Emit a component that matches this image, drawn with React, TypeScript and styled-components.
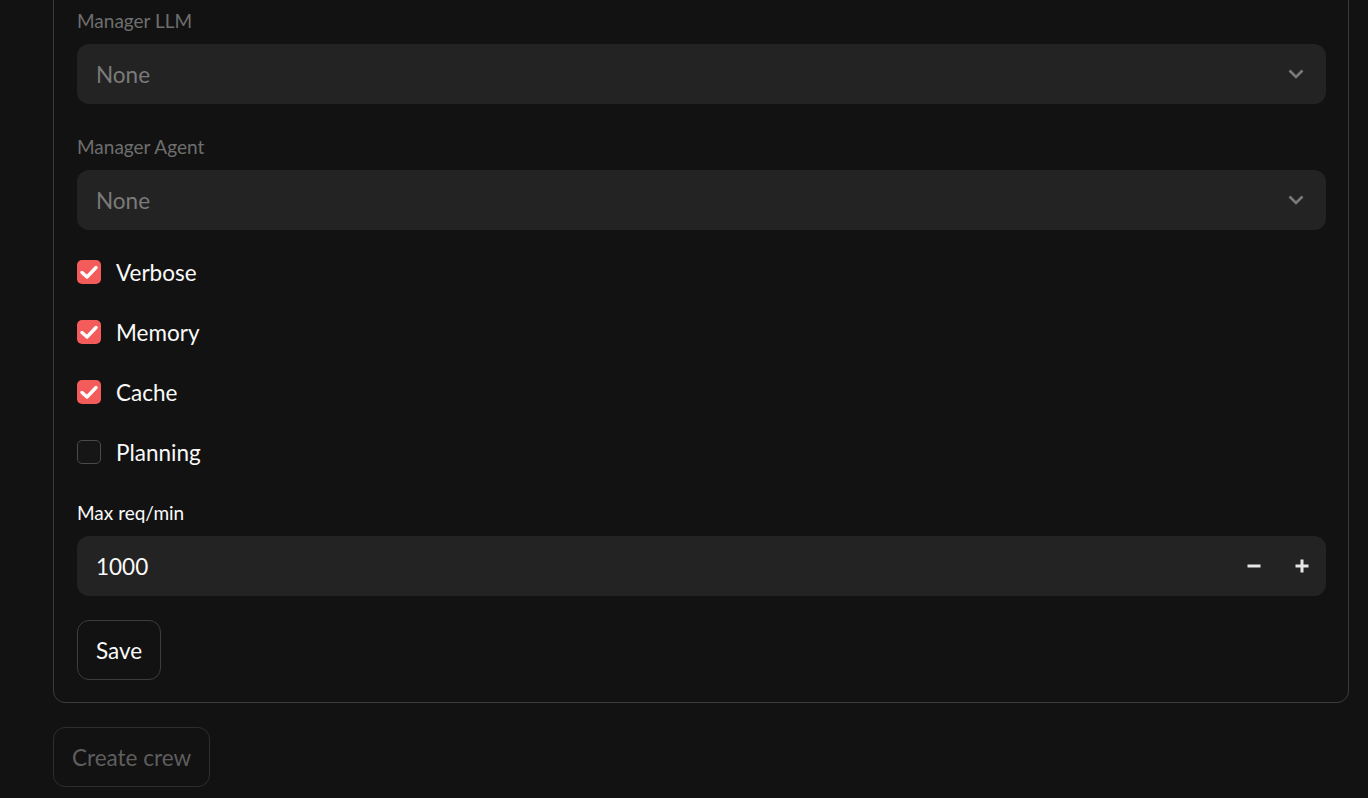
import React, { useState } from "react";
import styled, { createGlobalStyle } from "styled-components";

const GlobalStyle = createGlobalStyle`
	html, body {
		margin: 0;
		padding: 0;
		background: #121212;
	}
	body {
		font-family: Lato, "Liberation Sans", sans-serif;
		color: #fafafa;
	}
`;

const Page = styled.div`
	padding: 1px 0 0 53px;
	box-sizing: border-box;
`;

const Panel = styled.div`
	width: 1296px;
	box-sizing: border-box;
	margin-top: -24px;
	border: 1px solid #3b3b3b;
	border-radius: 12px;
	padding: 24px 22px 22px 23px;
	display: flex;
	flex-direction: column;
	gap: 24px;
`;

const Field = styled.div`
	display: flex;
	flex-direction: column;
`;

const Label = styled.label<{ $disabled?: boolean }>`
	height: 36px;
	margin-bottom: 6px;
	display: flex;
	align-items: center;
	font-size: 19px;
	color: ${(p) => (p.$disabled ? "#6e6e6e" : "#fafafa")};
`;

const SelectBox = styled.div`
	height: 60px;
	border-radius: 12px;
	background: #232323;
	display: flex;
	align-items: center;
	justify-content: space-between;
	padding: 0 21px 0 19px;
	font-size: 22.5px;
	color: #7a7a7a;
	cursor: not-allowed;
`;

const NumberBox = styled(SelectBox)`
	color: #fafafa;
	padding-right: 15px;
	cursor: text;
`;

const Steppers = styled.div`
	display: flex;
	gap: 30px;
	align-items: center;
`;

const StepButton = styled.button`
	background: none;
	border: none;
	padding: 0;
	width: 18px;
	height: 18px;
	display: flex;
	align-items: center;
	justify-content: center;
	cursor: pointer;
`;

const CheckRow = styled.label`
	height: 36px;
	display: flex;
	align-items: center;
	gap: 15px;
	font-size: 22.5px;
	color: #fafafa;
	cursor: pointer;
`;

const Box = styled.span<{ $checked: boolean }>`
	width: 24px;
	height: 24px;
	box-sizing: border-box;
	border-radius: 5px;
	display: flex;
	align-items: center;
	justify-content: center;
	background: ${(p) => (p.$checked ? "#f45b5b" : "#161616")};
	border: ${(p) => (p.$checked ? "none" : "1px solid #4a4a4a")};
`;

const Button = styled.button<{ $disabled?: boolean }>`
	align-self: flex-start;
	height: 60px;
	box-sizing: border-box;
	padding: 0 18px;
	border-radius: 12px;
	background: transparent;
	border: 1px solid ${(p) => (p.$disabled ? "#2e2e2e" : "#3d3d3d")};
	color: ${(p) => (p.$disabled ? "#5e5e5e" : "#fafafa")};
	font-family: inherit;
	font-size: 22.5px;
	cursor: ${(p) => (p.$disabled ? "not-allowed" : "pointer")};
`;

const Footer = styled.div`
	margin-top: 24px;
	display: flex;
`;

const Chevron = () => (
	<svg width="18" height="18" viewBox="0 0 18 18">
		<path d="M2.5 5.5 L9 12 L15.5 5.5" fill="none" stroke="#7a7a7a" strokeWidth="2.6" />
	</svg>
);

const Minus = () => (
	<svg width="14" height="14" viewBox="0 0 14 14">
		<rect x="0.5" y="5.5" width="13" height="3" fill="#e6e6e6" />
	</svg>
);

const Plus = () => (
	<svg width="14" height="14" viewBox="0 0 14 14">
		<rect x="0.5" y="5.5" width="13" height="3" fill="#e6e6e6" />
		<rect x="5.5" y="0.5" width="3" height="13" fill="#e6e6e6" />
	</svg>
);

const Check = () => (
	<svg width="24" height="24" viewBox="0 0 24 24">
		<path d="M5 12.5 L10 17 L19 7.5" fill="none" stroke="#ffffff" strokeWidth="3.4" strokeLinecap="round" strokeLinejoin="round" />
	</svg>
);

const options = ["Verbose", "Memory", "Cache", "Planning"];

export default function App() {
	const [checked, setChecked] = useState<Record<string, boolean>>({
		Verbose: true,
		Memory: true,
		Cache: true,
		Planning: false,
	});
	const [maxReq, setMaxReq] = useState(1000);

	return (
		<Page>
			<GlobalStyle />
			<Panel>
				<Field>
					<Label $disabled>Manager LLM</Label>
					<SelectBox>
						<span>None</span>
						<Chevron />
					</SelectBox>
				</Field>
				<Field>
					<Label $disabled>Manager Agent</Label>
					<SelectBox>
						<span>None</span>
						<Chevron />
					</SelectBox>
				</Field>
				{options.map((name) => (
					<CheckRow key={name} onClick={() => setChecked({ ...checked, [name]: !checked[name] })}>
						<Box $checked={checked[name]}>{checked[name] && <Check />}</Box>
						{name}
					</CheckRow>
				))}
				<Field>
					<Label>Max req/min</Label>
					<NumberBox>
						<span>{maxReq}</span>
						<Steppers>
							<StepButton onClick={() => setMaxReq(maxReq - 1)}>
								<Minus />
							</StepButton>
							<StepButton onClick={() => setMaxReq(maxReq + 1)}>
								<Plus />
							</StepButton>
						</Steppers>
					</NumberBox>
				</Field>
				<Button>Save</Button>
			</Panel>
			<Footer>
				<Button $disabled>Create crew</Button>
			</Footer>
		</Page>
	);
}
